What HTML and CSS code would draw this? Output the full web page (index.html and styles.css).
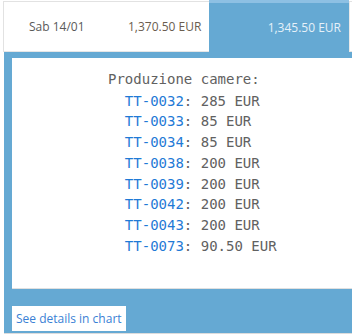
FILE: index.html
```html
<!DOCTYPE html>
<html>
<head>
<meta charset="utf-8">
<link rel="stylesheet" href="styles.css">
</head>
<body>
<div class="row">
  <div class="cell date">Sab 14/01</div>
  <div class="cell amount">1,370.50 EUR</div>
  <div class="cell active">1,345.50 EUR</div>
  <div class="cell edge"></div>
</div>
<div class="panel">
  <div class="box">
    <div class="detail">
      <div class="line">Produzione camere:</div>
      <div class="line item"><a class="code">TT-0032</a>: 285 EUR</div>
      <div class="line item"><a class="code">TT-0033</a>: 85 EUR</div>
      <div class="line item"><a class="code">TT-0034</a>: 85 EUR</div>
      <div class="line item"><a class="code">TT-0038</a>: 200 EUR</div>
      <div class="line item"><a class="code">TT-0039</a>: 200 EUR</div>
      <div class="line item"><a class="code">TT-0042</a>: 200 EUR</div>
      <div class="line item"><a class="code">TT-0043</a>: 200 EUR</div>
      <div class="line item"><a class="code">TT-0073</a>: 90.50 EUR</div>
    </div>
  </div>
  <div class="footer">
    <a class="btn">See details in chart</a>
  </div>
</div>
</body>
</html>
```

FILE: styles.css
```css
html, body {
  margin: 0;
  padding: 0;
  background: #ffffff;
}
body {
  font-family: "Open Sans", "Liberation Sans", sans-serif;
  font-size: 12px;
  color: #5b5b5b;
}
.row {
  display: flex;
  height: 51px;
  margin: 1px 0 0 3px;
  border-top: 1px solid #e2e2e2;
  border-left: 1px solid #e2e2e2;
  box-sizing: border-box;
}
.cell {
  display: flex;
  align-items: center;
  box-sizing: border-box;
  border-bottom: 1px solid #e6e6e6;
}
.date {
  width: 104px;
  padding-left: 25px;
  color: #5a5a5a;
}
.amount {
  width: 101px;
  padding-left: 20px;
  color: #6a5d4f;
}
.active {
  width: 140px;
  margin-top: -2px;
  height: 52px;
  justify-content: flex-end;
  padding-right: 8px;
  background: #65a9d3;
  border-top: 3px solid #8dc0e3;
  border-bottom: none;
  color: #e6f1f9;
}
.edge {
  flex: 1;
  border-left: 1px solid #eaeaea;
}
.panel {
  margin-left: 4px;
  background: #65a9d3;
  padding: 6px 0 0 8px;
  border-bottom: 1px solid #dcdcdc;
}
.box {
  background: #ffffff;
  height: 231px;
  box-sizing: border-box;
  padding: 11px 0 0 96px;
  border-bottom: 1px solid #e0e0e0;
}
.detail {
  font-family: "DejaVu Sans Mono", monospace;
  font-size: 14px;
  line-height: 20.7px;
  color: #616161;
}
.line {
  white-space: pre;
}
.line:first-child {
  margin-bottom: 1px;
}
.item {
  padding-left: 2ch;
}
.code {
  color: #1f7ad6;
}
.footer {
  padding: 17px 0 2px 0;
}
.btn {
  display: inline-block;
  background: #ffffff;
  color: #3a7fd5;
  font-size: 12px;
  line-height: 25px;
  padding: 0 4px;
}
```
